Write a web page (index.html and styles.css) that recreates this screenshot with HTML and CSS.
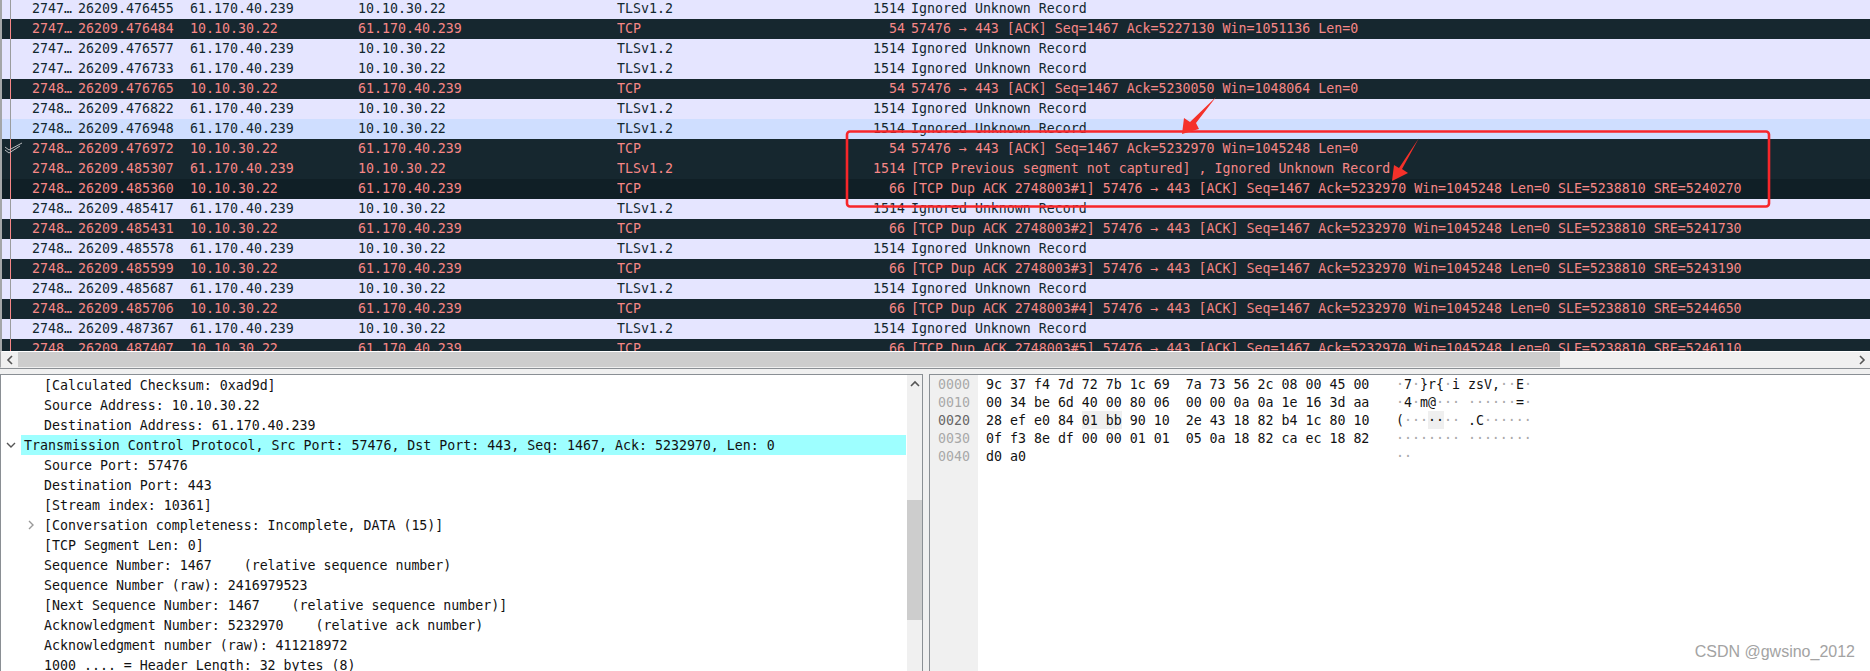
FILE: index.html
```html
<!DOCTYPE html>
<html lang="en">
<head>
    <meta charset="UTF-8">
    <title>Wireshark capture</title>
    <link rel="stylesheet" href="styles.css">
</head>
<body>
    <div class="packet_list">
        <div class="packets">
            <div class="row tls"><span class="mark"></span><span class="no">2747…</span><span class="time">26209.476455</span><span class="src">61.170.40.239</span><span class="dst">10.10.30.22</span><span class="proto">TLSv1.2</span><span class="len">1514</span><span class="info">Ignored Unknown Record</span></div>
            <div class="row tcp"><span class="mark"></span><span class="no">2747…</span><span class="time">26209.476484</span><span class="src">10.10.30.22</span><span class="dst">61.170.40.239</span><span class="proto">TCP</span><span class="len">54</span><span class="info">57476 → 443 [ACK] Seq=1467 Ack=5227130 Win=1051136 Len=0</span></div>
            <div class="row tls"><span class="mark"></span><span class="no">2747…</span><span class="time">26209.476577</span><span class="src">61.170.40.239</span><span class="dst">10.10.30.22</span><span class="proto">TLSv1.2</span><span class="len">1514</span><span class="info">Ignored Unknown Record</span></div>
            <div class="row tls"><span class="mark"></span><span class="no">2747…</span><span class="time">26209.476733</span><span class="src">61.170.40.239</span><span class="dst">10.10.30.22</span><span class="proto">TLSv1.2</span><span class="len">1514</span><span class="info">Ignored Unknown Record</span></div>
            <div class="row tcp"><span class="mark"></span><span class="no">2748…</span><span class="time">26209.476765</span><span class="src">10.10.30.22</span><span class="dst">61.170.40.239</span><span class="proto">TCP</span><span class="len">54</span><span class="info">57476 → 443 [ACK] Seq=1467 Ack=5230050 Win=1048064 Len=0</span></div>
            <div class="row tls"><span class="mark"></span><span class="no">2748…</span><span class="time">26209.476822</span><span class="src">61.170.40.239</span><span class="dst">10.10.30.22</span><span class="proto">TLSv1.2</span><span class="len">1514</span><span class="info">Ignored Unknown Record</span></div>
            <div class="row tls related"><span class="mark"></span><span class="no">2748…</span><span class="time">26209.476948</span><span class="src">61.170.40.239</span><span class="dst">10.10.30.22</span><span class="proto">TLSv1.2</span><span class="len">1514</span><span class="info">Ignored Unknown Record</span></div>
            <div class="row tcp"><span class="mark"><svg class="check" width="20" height="12" viewBox="0 0 20 12"><path d="M2 5l4 3L19 1M2 8l4 3L17 4" fill="none" stroke="#b9bcbf" stroke-width="1"/></svg></span><span class="no">2748…</span><span class="time">26209.476972</span><span class="src">10.10.30.22</span><span class="dst">61.170.40.239</span><span class="proto">TCP</span><span class="len">54</span><span class="info">57476 → 443 [ACK] Seq=1467 Ack=5232970 Win=1045248 Len=0</span></div>
            <div class="row tcp"><span class="mark"></span><span class="no">2748…</span><span class="time">26209.485307</span><span class="src">61.170.40.239</span><span class="dst">10.10.30.22</span><span class="proto">TLSv1.2</span><span class="len">1514</span><span class="info">[TCP Previous segment not captured] , Ignored Unknown Record</span></div>
            <div class="row tcp darker"><span class="mark"></span><span class="no">2748…</span><span class="time">26209.485360</span><span class="src">10.10.30.22</span><span class="dst">61.170.40.239</span><span class="proto">TCP</span><span class="len">66</span><span class="info">[TCP Dup ACK 2748003#1] 57476 → 443 [ACK] Seq=1467 Ack=5232970 Win=1045248 Len=0 SLE=5238810 SRE=5240270</span></div>
            <div class="row tls"><span class="mark"></span><span class="no">2748…</span><span class="time">26209.485417</span><span class="src">61.170.40.239</span><span class="dst">10.10.30.22</span><span class="proto">TLSv1.2</span><span class="len">1514</span><span class="info">Ignored Unknown Record</span></div>
            <div class="row tcp"><span class="mark"></span><span class="no">2748…</span><span class="time">26209.485431</span><span class="src">10.10.30.22</span><span class="dst">61.170.40.239</span><span class="proto">TCP</span><span class="len">66</span><span class="info">[TCP Dup ACK 2748003#2] 57476 → 443 [ACK] Seq=1467 Ack=5232970 Win=1045248 Len=0 SLE=5238810 SRE=5241730</span></div>
            <div class="row tls"><span class="mark"></span><span class="no">2748…</span><span class="time">26209.485578</span><span class="src">61.170.40.239</span><span class="dst">10.10.30.22</span><span class="proto">TLSv1.2</span><span class="len">1514</span><span class="info">Ignored Unknown Record</span></div>
            <div class="row tcp"><span class="mark"></span><span class="no">2748…</span><span class="time">26209.485599</span><span class="src">10.10.30.22</span><span class="dst">61.170.40.239</span><span class="proto">TCP</span><span class="len">66</span><span class="info">[TCP Dup ACK 2748003#3] 57476 → 443 [ACK] Seq=1467 Ack=5232970 Win=1045248 Len=0 SLE=5238810 SRE=5243190</span></div>
            <div class="row tls"><span class="mark"></span><span class="no">2748…</span><span class="time">26209.485687</span><span class="src">61.170.40.239</span><span class="dst">10.10.30.22</span><span class="proto">TLSv1.2</span><span class="len">1514</span><span class="info">Ignored Unknown Record</span></div>
            <div class="row tcp"><span class="mark"></span><span class="no">2748…</span><span class="time">26209.485706</span><span class="src">10.10.30.22</span><span class="dst">61.170.40.239</span><span class="proto">TCP</span><span class="len">66</span><span class="info">[TCP Dup ACK 2748003#4] 57476 → 443 [ACK] Seq=1467 Ack=5232970 Win=1045248 Len=0 SLE=5238810 SRE=5244650</span></div>
            <div class="row tls"><span class="mark"></span><span class="no">2748…</span><span class="time">26209.487367</span><span class="src">61.170.40.239</span><span class="dst">10.10.30.22</span><span class="proto">TLSv1.2</span><span class="len">1514</span><span class="info">Ignored Unknown Record</span></div>
            <div class="row tcp"><span class="mark"></span><span class="no">2748…</span><span class="time">26209.487407</span><span class="src">10.10.30.22</span><span class="dst">61.170.40.239</span><span class="proto">TCP</span><span class="len">66</span><span class="info">[TCP Dup ACK 2748003#5] 57476 → 443 [ACK] Seq=1467 Ack=5232970 Win=1045248 Len=0 SLE=5238810 SRE=5246110</span></div>
        </div>
    </div>

    <div class="h_scroll">
        <span class="scroll_btn"><svg width="8" height="10" viewBox="0 0 8 10"><path d="M6 1L2 5l4 4" fill="none" stroke="#555" stroke-width="1.6"/></svg></span>
        <span class="h_thumb"></span>
        <span class="scroll_btn"><svg width="8" height="10" viewBox="0 0 8 10"><path d="M2 1l4 4-4 4" fill="none" stroke="#555" stroke-width="1.6"/></svg></span>
    </div>

    <div class="panes">
        <div class="details">
            <div class="tree">
                <div class="node">[Calculated Checksum: 0xad9d]</div>
                <div class="node">Source Address: 10.10.30.22</div>
                <div class="node">Destination Address: 61.170.40.239</div>
                <div class="node_top"><span class="twisty_top"><svg width="10" height="8" viewBox="0 0 10 8"><path d="M1 2l4 4 4-4" fill="none" stroke="#555" stroke-width="1.4"/></svg></span><span class="node_label">Transmission Control Protocol, Src Port: 57476, Dst Port: 443, Seq: 1467, Ack: 5232970, Len: 0</span></div>
                <div class="node">Source Port: 57476</div>
                <div class="node">Destination Port: 443</div>
                <div class="node">[Stream index: 10361]</div>
                <div class="node"><span class="twisty"><svg width="8" height="10" viewBox="0 0 8 10"><path d="M2 1l4 4-4 4" fill="none" stroke="#999" stroke-width="1.4"/></svg></span>[Conversation completeness: Incomplete, DATA (15)]</div>
                <div class="node">[TCP Segment Len: 0]</div>
                <div class="node">Sequence Number: 1467    (relative sequence number)</div>
                <div class="node">Sequence Number (raw): 2416979523</div>
                <div class="node">[Next Sequence Number: 1467    (relative sequence number)]</div>
                <div class="node">Acknowledgment Number: 5232970    (relative ack number)</div>
                <div class="node">Acknowledgment number (raw): 411218972</div>
                <div class="node">1000 .... = Header Length: 32 bytes (8)</div>
            </div>
            <div class="v_scroll">
                <span class="v_btn"><svg width="10" height="8" viewBox="0 0 10 8"><path d="M1 6l4-4 4 4" fill="none" stroke="#555" stroke-width="1.6"/></svg></span>
                <span class="v_thumb"></span>
            </div>
        </div>

        <div class="bytes">
            <div class="offsets">
                <div>0000</div>
                <div>0010</div>
                <div class="offset_on">0020</div>
                <div>0030</div>
                <div>0040</div>
            </div>
            <div class="hex">
                <div>9c 37 f4 7d 72 7b 1c 69  7a 73 56 2c 08 00 45 00</div>
                <div>00 34 be 6d 40 00 80 06  00 00 0a 0a 1e 16 3d aa</div>
                <div>28 ef e0 84 <span class="hl">01 bb</span> 90 10  2e 43 18 82 b4 1c 80 10</div>
                <div>0f f3 8e df 00 00 01 01  05 0a 18 82 ca ec 18 82</div>
                <div>d0 a0</div>
            </div>
            <div class="ascii">
                <div><i>·</i>7<i>·</i>}r{<i>·</i>i zsV,<i>··</i>E<i>·</i></div>
                <div><i>·</i>4<i>·</i>m@<i>···</i> <i>······</i>=<i>·</i></div>
                <div>(<i>···</i><span class="hl">··</span><i>··</i> .C<i>······</i></div>
                <div><i>········</i> <i>········</i></div>
                <div><i>··</i></div>
            </div>
        </div>
    </div>

    <!-- annotations drawn over the screenshot -->
    <svg class="notes" width="1870" height="671" viewBox="0 0 1870 671">
        <rect x="847" y="131.5" width="922" height="75" rx="3" fill="none" stroke="#f7262a" stroke-width="2.6"/>
        <polygon points="1216,97 1196,123 1199,129 1182,134 1184,118 1190,122" fill="#f5312a"/>
        <polygon points="1419,138 1402,169 1408,173 1392,181 1394,165 1399,168" fill="#f5312a"/>
    </svg>
    <div class="watermark">CSDN @gwsino_2012</div>
</body>
</html>
```

FILE: styles.css
```css
html, body {
    margin: 0;
    height: 671px;
    overflow: hidden;
}

body {
    display: flex;
    flex-direction: column;
    position: relative;
    background: #f0f0f0;
    font-family: "DejaVu Sans Mono", "Liberation Mono", monospace;
    font-size: 13.28px;
    color: #12272e;
}

/* packet list */
.packet_list {
    height: 351px;
    flex-shrink: 0;
    overflow: hidden;
    border-left: 2px solid #a4a6a8;
    border-bottom: 1px solid #fff;
    background: #fff;
}

.packets {
    margin-top: -1px;
}

.row {
    display: flex;
    height: 20px;
    line-height: 20px;
    white-space: pre;
}

.tls {
    background: #e5e5ff;
    color: #12272e;
}

.tcp {
    background: #16272f;
    color: #f78787;
}

.related {
    background: #cfdeff;
}

.darker {
    background: #101f26;
}

.mark {
    width: 8px;
    border-right: 1px solid #9a9c9e;
    position: relative;
}

.tcp .mark {
    border-right-color: #f78787;
}

.check {
    position: absolute;
    left: 1px;
    top: 3px;
}

.no {
    margin-left: 21px;
    width: 46px;
}

.time {
    width: 112px;
}

.src {
    width: 168px;
}

.dst {
    width: 259px;
}

.proto {
    width: 254px;
}

.len {
    width: 34px;
    text-align: right;
}

.info {
    margin-left: 6px;
}

/* scrollbars */
.h_scroll {
    display: flex;
    height: 15px;
    flex-shrink: 0;
    border-left: 1px solid #a4a6a8;
    border-bottom: 1px solid #f0f0f0;
    background: #f0f0f0;
}

.scroll_btn {
    width: 17px;
    display: flex;
    align-items: center;
    justify-content: center;
}

.h_thumb {
    width: 1542px;
    background: #cdcdcd;
    margin-right: auto;
}

/* bottom panes */
.panes {
    flex: 1;
    display: flex;
    min-height: 0;
    padding-top: 5px;
    border-top: 1px solid #8a8f94;
}

.details {
    display: flex;
    width: 921px;
    flex-shrink: 0;
    border-top: 1px solid #8a8f94;
    border-left: 1px solid #8a8f94;
    border-right: 1px solid #8a8f94;
    background: #fff;
}

.tree {
    flex: 1;
    color: #111;
    line-height: 22px;
}

.node {
    height: 20px;
    padding-left: 43px;
    position: relative;
    white-space: pre;
}

.twisty {
    position: absolute;
    left: 26px;
    top: 5px;
    line-height: 0;
}

.node_top {
    display: flex;
    height: 20px;
    white-space: pre;
}

.twisty_top {
    width: 20px;
    display: flex;
    align-items: center;
    justify-content: center;
}

.node_label {
    flex: 1;
    background: #9effff;
    padding-left: 3px;
}

.v_scroll {
    width: 15px;
    margin-left: 1px;
    background: #f0f0f0;
    display: flex;
    flex-direction: column;
}

.v_btn {
    height: 18px;
    display: flex;
    align-items: center;
    justify-content: center;
}

.v_thumb {
    height: 120px;
    margin-top: 107px;
    background: #cdcdcd;
}

.bytes {
    flex: 1;
    display: flex;
    margin-left: 6px;
    border-top: 1px solid #8a8f94;
    border-left: 1px solid #8a8f94;
    background: #fff;
    line-height: 20px;
    color: #111;
}

.bytes div div {
    height: 18px;
    white-space: pre;
}

.offsets {
    width: 40px;
    padding-left: 8px;
    background: #f0f0f0;
    color: #a8a8a8;
}

.bytes .offset_on {
    color: #666;
}

.hex {
    width: 410px;
    margin-left: 8px;
}

.hl {
    display: inline-block;
    height: 18px;
    background: #efefef;
}

.ascii i {
    font-style: normal;
    color: #a8a8a8;
}

/* things on top of the capture */
.notes {
    position: absolute;
    left: 0;
    top: 0;
    pointer-events: none;
}

.watermark {
    position: absolute;
    right: 15px;
    top: 643px;
    font-family: "Liberation Sans", sans-serif;
    font-size: 16px;
    line-height: 18px;
    color: #a3a3a3;
}
```
